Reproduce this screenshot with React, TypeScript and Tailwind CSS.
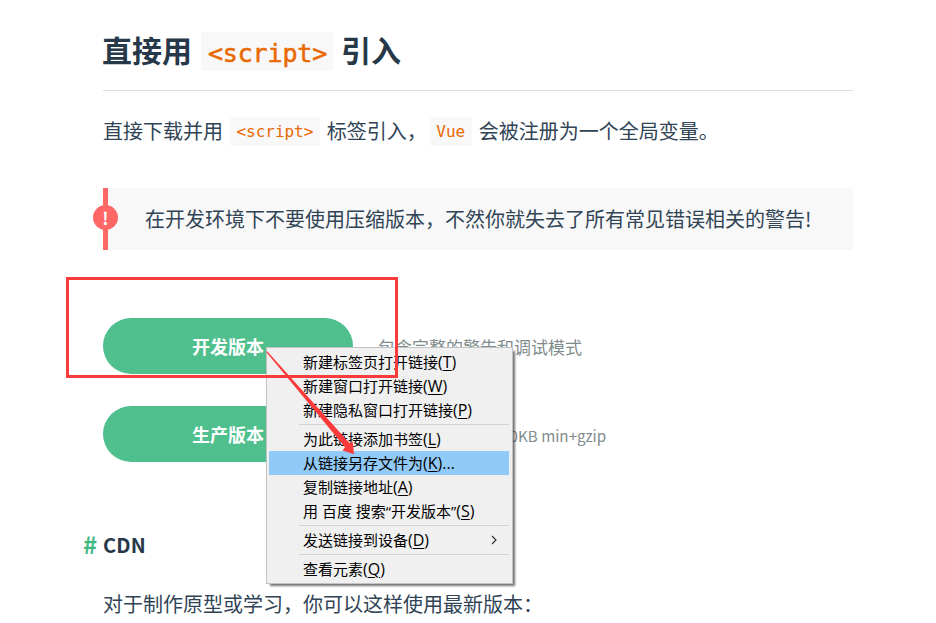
import type { ReactNode } from "react";

const MONO = "font-['DejaVu_Sans_Mono','Liberation_Mono',monospace]";

type Entry = { label: string; k: string; tail?: string; active?: boolean; sub?: boolean };

const groups: Entry[][] = [
  [
    { label: "新建标签页打开链接", k: "T" },
    { label: "新建窗口打开链接", k: "W" },
    { label: "新建隐私窗口打开链接", k: "P" },
  ],
  [
    { label: "为此链接添加书签", k: "L" },
    { label: "从链接另存文件为", k: "K", tail: "...", active: true },
    { label: "复制链接地址", k: "A" },
    { label: "用 百度 搜索“开发版本”", k: "S" },
  ],
  [{ label: "发送链接到设备", k: "D", sub: true }],
  [{ label: "查看元素", k: "Q" }],
];

function Code({ children }: { children: ReactNode }) {
  return (
    <code
      className={`flex h-[29px] items-center rounded-[2px] bg-[#f8f8f8] px-[6.5px] pt-px text-[16px] tracking-[-0.03px] text-[#e96900] ${MONO}`}
    >
      {children}
    </code>
  );
}

function Download({ label, note }: { label: string; note: ReactNode }) {
  return (
    <div className="flex h-14 items-center">
      <a className="flex h-14 w-[250px] items-center justify-center rounded-full bg-[#4fc08d] text-[18px] font-bold text-white">
        {label}
      </a>
      <span className="ml-[25px] pt-[2px] text-[17px] leading-6 text-[#7f8c8d]">{note}</span>
    </div>
  );
}

function ContextMenu() {
  return (
    <div className="absolute left-[266px] top-[347px] w-[247px] border border-[#c3c3c3] bg-[#f0f0f0] py-[2px] pl-[2px] pr-[3px] font-['Open_Sans','Noto_Sans_CJK_SC',sans-serif] text-[15px] leading-6 text-black shadow-[3px_3px_2px_-1px_rgba(0,0,0,0.55)]">
      {groups.map((group, i) => (
        <div key={i}>
          {i > 0 && (
            <div className="flex h-[5px] items-center pl-[30px]">
              <div className="h-px w-full bg-[#d2d2d2]" />
            </div>
          )}
          {group.map((e) => (
            <div
              key={e.k}
              className={`flex h-6 items-center justify-between whitespace-pre pl-[34px] pr-[11px] ${e.active ? "bg-[#91c9f7]" : ""}`}
            >
              <span>
                {e.label}
                <span className="text-[16px]">
                  (<span className="underline decoration-1 underline-offset-2">{e.k}</span>){e.tail}
                </span>
              </span>
              {e.sub && (
                <svg width="8" height="10" viewBox="0 0 8 10" fill="none" stroke="#333" strokeWidth="1.2">
                  <path d="M2 1l4 4-4 4" />
                </svg>
              )}
            </div>
          ))}
        </div>
      ))}
    </div>
  );
}

export default function App() {
  return (
    <div className="relative h-[623px] w-[936px] overflow-hidden whitespace-nowrap bg-white font-['Noto_Sans_CJK_SC',sans-serif] text-[#304455]">
      <main className="ml-[103px] w-[750px] pt-[12px]">
        <h2 className="flex h-[79px] items-center border-b border-[#dddddd] text-[30px] font-bold text-[#273849]">
          <span className="-ml-px pb-[3px]">直接用</span>
          <code
            className={`ml-[9px] mr-[8px] flex h-[39px] w-[132px] items-center justify-center rounded-[2px] bg-[#f8f8f8] pl-px pt-[5px] text-[25px] font-normal tracking-[-0.15px] text-[#e96900] [-webkit-text-stroke:0.5px_#e96900] ${MONO}`}
          >
            &lt;script&gt;
          </code>
          <span className="pb-[3px]">引入</span>
        </h2>

        <p className="mt-[26px] flex h-[29px] items-center text-[20px]">
          <span className="mr-[7px] pb-[2px]">直接下载并用</span>
          <Code>&lt;script&gt;</Code>
          <span className="ml-[7px] mr-[3px] pb-[2px]">标签引入，</span>
          <Code>Vue</Code>
          <span className="ml-[7px] pb-[2px]">会被注册为一个全局变量。</span>
        </p>

        <div className="relative mt-[42px] flex h-[62px] items-center rounded-r-[2px] border-l-[5px] border-[#ff6666] bg-[#f8f8f8] pl-[37px] text-[20px]">
          <span className="absolute left-[-15px] top-[17px] flex h-[25px] w-[25px] items-center justify-center rounded-full bg-[#ff6666] text-[17px] font-bold leading-none text-white">
            !
          </span>
          在开发环境下不要使用压缩版本，不然你就失去了所有常见错误相关的警告!
        </div>

        <div className="mt-[68px] flex flex-col gap-8">
          <Download label="开发版本" note="包含完整的警告和调试模式" />
          <Download
            label="生产版本"
            note={
              <>
                删除了警告，<span className="text-[15.2px]">30.90KB min+gzip</span>
              </>
            }
          />
        </div>

        <h3 className="-ml-[20px] mt-[66px] flex h-8 items-center text-[20px] font-bold text-[#273849]">
          <span className="w-[20px] text-[24px]  leading-8 text-[#42b983]">#</span>
          <span className="pt-px tracking-[0.2px]">CDN</span>
        </h3>
        <p className="mt-[29px] flex h-[30px] items-center text-[20px]">对于制作原型或学习，你可以这样使用最新版本：</p>
      </main>

      <ContextMenu />

      <div className="absolute left-[66px] top-[277px] h-[101px] w-[332px] border-[3px] border-[#fb3b3b]" />
      <svg className="absolute left-[260px] top-[340px]" width="100" height="120" viewBox="0 0 100 120" fill="#fb3b3b">
        <path d="M6.2 12.1L7.2 11.3L89.6 103.2L92.7 101.5L94 114.2L82.5 110.4L85 107.2Z" />
      </svg>
    </div>
  );
}
